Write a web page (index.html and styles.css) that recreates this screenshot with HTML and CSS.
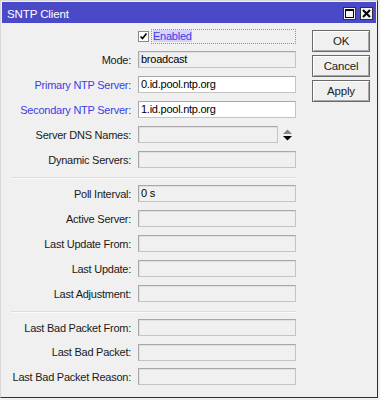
FILE: index.html
```html
<!DOCTYPE html>
<html lang="en">
<head>
  <meta charset="UTF-8" />
  <title>SNTP Client</title>
  <link rel="stylesheet" href="styles.css">
</head>
<body>
  <div class="window">
    <div class="titlebar">
      <span class="title">SNTP Client</span>
      <div class="title-buttons">
        <span class="tbtn">
          <svg width="9" height="9" viewBox="0 0 9 9"><rect x="0.5" y="0.5" width="8" height="8" fill="none" stroke="#000"/><rect x="0" y="0" width="9" height="2" fill="#000"/></svg>
        </span>
        <span class="tbtn">
          <svg width="9" height="9" viewBox="0 0 9 9"><path d="M1 1 L8 8 M8 1 L1 8" stroke="#000" stroke-width="2"/></svg>
        </span>
      </div>
    </div>

    <div class="content">
      <div class="form">
        <div class="row check-row">
          <span></span>
          <label class="check-label">
            <span class="checkbox">
              <svg width="9" height="9" viewBox="0 0 9 9"><path d="M1.5 4.5 L3.5 6.5 L7.5 1.5" fill="none" stroke="#000" stroke-width="1.6"/></svg>
            </span>
            <span class="focus-box"><span class="sel">Enabled</span></span>
          </label>
        </div>

        <div class="row first">
          <span class="label">Mode:</span>
          <div class="field">broadcast</div>
        </div>
        <div class="row">
          <span class="label blue">Primary NTP Server:</span>
          <div class="field white">0.id.pool.ntp.org</div>
        </div>
        <div class="row">
          <span class="label blue">Secondary NTP Server:</span>
          <div class="field white">1.id.pool.ntp.org</div>
        </div>
        <div class="row">
          <span class="label">Server DNS Names:</span>
          <div class="field-with-arrows">
            <div class="field"></div>
            <svg class="arrows" width="9" height="12" viewBox="0 0 9 12"><path d="M0 5 L4.5 0.5 L9 5 Z" fill="#7a8a7a"/><path d="M0 7 L9 7 L4.5 11.5 Z" fill="#000"/></svg>
          </div>
        </div>
        <div class="row">
          <span class="label">Dynamic Servers:</span>
          <div class="field"></div>
        </div>

        <div class="separator"></div>

        <div class="row first">
          <span class="label">Poll Interval:</span>
          <div class="field">0 s</div>
        </div>
        <div class="row">
          <span class="label">Active Server:</span>
          <div class="field"></div>
        </div>
        <div class="row">
          <span class="label">Last Update From:</span>
          <div class="field"></div>
        </div>
        <div class="row">
          <span class="label">Last Update:</span>
          <div class="field"></div>
        </div>
        <div class="row">
          <span class="label">Last Adjustment:</span>
          <div class="field"></div>
        </div>

        <div class="separator sep2"></div>

        <div class="row first">
          <span class="label">Last Bad Packet From:</span>
          <div class="field"></div>
        </div>
        <div class="row tight">
          <span class="label">Last Bad Packet:</span>
          <div class="field"></div>
        </div>
        <div class="row tight">
          <span class="label">Last Bad Packet Reason:</span>
          <div class="field"></div>
        </div>
      </div>

      <div class="buttons">
        <button class="btn">OK</button>
        <button class="btn">Cancel</button>
        <button class="btn">Apply</button>
      </div>
    </div>
  </div>
</body>
</html>
```

FILE: styles.css
```css
body {
  margin: 0;
  background: #f0f0f0;
  font-family: "Liberation Sans", Arial, sans-serif;
  font-size: 11px;
  letter-spacing: -0.25px;
  color: #1a1a1a;
}

.window {
  width: 378px;
  height: 398px;
  box-sizing: border-box;
  padding: 1px;
  background: #f0f0f0;
  border-top: 1px solid #d8d8d8;
  border-left: 1px solid #d8d8d8;
  border-right: 1px solid #303030;
  border-bottom: 1px solid #303030;
}

.titlebar {
  height: 21px;
  background: #4a4ac8;
  display: flex;
  align-items: center;
  justify-content: space-between;
  padding: 0 3px 0 5px;
}

.title {
  color: #fff;
  font-size: 11.5px;
  letter-spacing: -0.1px;
  padding-top: 2px;
}

.title-buttons {
  display: flex;
  gap: 4px;
  padding-top: 2px;
}

.tbtn {
  width: 13px;
  height: 13px;
  box-sizing: border-box;
  background: #f4f4f4;
  border: 1px solid #303030;
  display: flex;
  align-items: center;
  justify-content: center;
}

.content {
  display: flex;
  padding-top: 6px;
}

.form {
  width: 295px;
  display: flex;
  flex-direction: column;
}

.row {
  display: grid;
  grid-template-columns: 129px 158px;
  column-gap: 7px;
  align-items: center;
  margin-top: 8px;
}

.row.first {
  margin-top: 6px;
}

.row.tight {
  margin-top: 7.5px;
}

.check-row {
  margin-top: 0;
  height: 15px;
}

.check-row + .row.first {
  margin-top: 7px;
}

.label {
  text-align: right;
  white-space: nowrap;
}

.label.blue {
  color: #3c3ce6;
}

.field {
  height: 17px;
  box-sizing: border-box;
  border: 1px solid #a8a8a8;
  border-right-color: #c4c4c4;
  border-bottom-color: #c4c4c4;
  box-shadow: inset 1px 1px #e0e0e0;
  background: #f0f0f0;
  padding: 1px 0 0 2px;
  line-height: 13px;
  color: #000;
  white-space: nowrap;
}

.field.white {
  background: #fff;
  box-shadow: none;
}

.field-with-arrows {
  display: flex;
  align-items: center;
}

.field-with-arrows .field {
  width: 140px;
}

.arrows {
  margin-left: 5px;
}

.check-label {
  display: flex;
  align-items: center;
  gap: 2px;
}

.checkbox {
  width: 11px;
  height: 11px;
  box-sizing: border-box;
  border: 1px solid #8a8a8a;
  background: #fff;
  display: flex;
  align-items: center;
  justify-content: center;
}

.focus-box {
  flex: 1;
  height: 15px;
  box-sizing: border-box;
  border: 1px dotted #9c9c3c;
  padding-left: 1px;
  line-height: 13px;
}

.sel {
  color: #3c3ce6;
  background: #d4d4fa;
}

.separator {
  margin: 9px 0 0 9px;
  width: 285px;
  border-top: 1px solid #dcdcdc;
  border-bottom: 1px solid #fafafa;
}

.buttons {
  display: flex;
  flex-direction: column;
  gap: 3px;
  margin-left: 15px;
  padding-top: 1px;
}

.btn {
  width: 58px;
  height: 22px;
  padding: 0;
  background: #f0f0f0;
  border: 1px solid #6a6a6a;
  box-shadow: inset 1px 1px #fff, inset -1px -1px #a8a8a8;
  font-family: inherit;
  font-size: 11.5px;
  letter-spacing: -0.2px;
  color: #222;
}
```
